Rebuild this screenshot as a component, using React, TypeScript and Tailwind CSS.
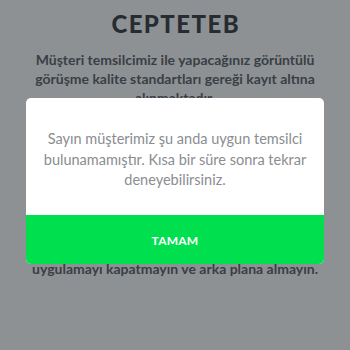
import React from "react";

const App = () => {
  return (
    <div
      className="relative w-[350px] h-[350px] overflow-hidden bg-white"
      style={{ fontFamily: "Lato, 'Noto Sans', sans-serif" }}
    >
      <div className="flex flex-col items-center px-8 pt-[9px] text-[#555a60]">
        <h1 className="text-[24px] font-black tracking-[0.06em] leading-[30px] pl-[0.06em] text-[#2f353b]">
          CEPTETEB
        </h1>
        <p className="mt-[11px] text-[14px] font-bold leading-[19px] text-center">
          Müşteri temsilcimiz ile yapacağınız görüntülü görüşme kalite standartları gereği kayıt altına alınmaktadır.
        </p>
        <p className="mt-[114px] text-[14px] font-bold leading-[19px] text-center">
          Görüşme süresince bağlantınızın kesilmemesi için lütfen
          <br />
          uygulamayı kapatmayın ve arka plana almayın.
        </p>
      </div>

      <div className="absolute inset-0 bg-[#1d232a]/50 flex items-start justify-center pt-[98px]">
        <div className="w-[298px] rounded-[5px] overflow-hidden bg-white">
          <p className="px-3 pt-[31px] pb-[24px] text-center text-[14.5px] leading-[20.5px] text-[#8a8d91]">
            Sayın müşterimiz şu anda uygun temsilci
            <br />
            bulunamamıştır. Kısa bir süre sonra tekrar
            <br />
            deneyebilirsiniz.
          </p>
          <button className="w-full h-[49px] pt-[3px] bg-[#00e04f] text-white text-[12px] font-bold tracking-[0.02em]">
            TAMAM
          </button>
        </div>
      </div>
    </div>
  );
};

export default App;
